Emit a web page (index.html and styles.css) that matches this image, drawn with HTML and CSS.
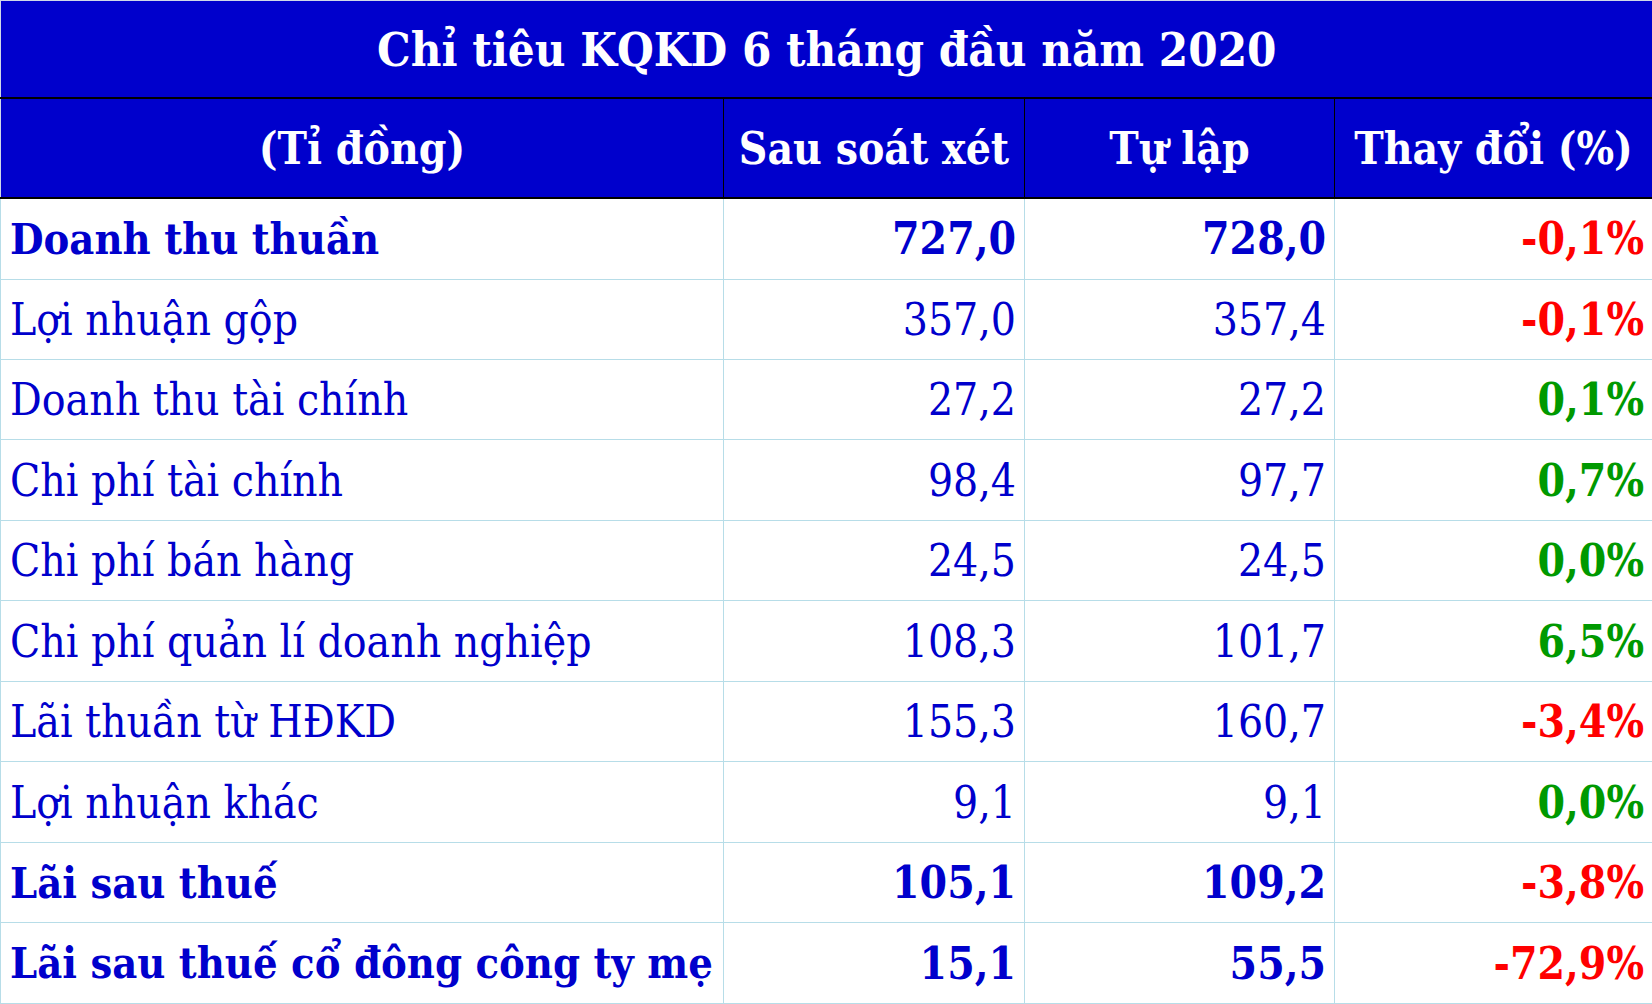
FILE: index.html
```html
<!DOCTYPE html>
<html lang="vi">
<head>
<meta charset="utf-8">
<title>Chỉ tiêu KQKD 6 tháng đầu năm 2020</title>
<link rel="stylesheet" href="styles.css">
</head>
<body>
<table class="kq">
  <colgroup>
    <col class="c1"><col class="c2"><col class="c3"><col class="c4">
  </colgroup>
  <thead>
    <tr class="title-row"><th colspan="4">Chỉ tiêu KQKD 6 tháng đầu năm 2020</th></tr>
    <tr class="head-row">
      <th>(Tỉ đồng)</th><th>Sau soát xét</th><th>Tự lập</th><th>Thay đổi (%)</th>
    </tr>
  </thead>
  <tbody>
    <tr class="b"><td>Doanh thu thuần</td><td>727,0</td><td>728,0</td><td class="neg">-0,1%</td></tr>
    <tr><td>Lợi nhuận gộp</td><td>357,0</td><td>357,4</td><td class="neg">-0,1%</td></tr>
    <tr><td>Doanh thu tài chính</td><td>27,2</td><td>27,2</td><td class="pos">0,1%</td></tr>
    <tr><td>Chi phí tài chính</td><td>98,4</td><td>97,7</td><td class="pos">0,7%</td></tr>
    <tr><td>Chi phí bán hàng</td><td>24,5</td><td>24,5</td><td class="pos">0,0%</td></tr>
    <tr><td>Chi phí quản lí doanh nghiệp</td><td>108,3</td><td>101,7</td><td class="pos">6,5%</td></tr>
    <tr><td>Lãi thuần từ HĐKD</td><td>155,3</td><td>160,7</td><td class="neg">-3,4%</td></tr>
    <tr><td>Lợi nhuận khác</td><td>9,1</td><td>9,1</td><td class="pos">0,0%</td></tr>
    <tr class="b"><td>Lãi sau thuế</td><td>105,1</td><td>109,2</td><td class="neg">-3,8%</td></tr>
    <tr class="b"><td>Lãi sau thuế cổ đông công ty mẹ</td><td>15,1</td><td>55,5</td><td class="neg">-72,9%</td></tr>
  </tbody>
</table>
</body>
</html>
```
FILE: styles.css
```css
html, body {
  margin: 0;
  padding: 0;
  background: #ffffff;
}
.kq {
  width: 1652px;
  height: 1004px;
  border-collapse: collapse;
  table-layout: fixed;
  font-family: "DejaVu Serif Condensed", "DejaVu Serif", serif;
  color: #0000cc;
}
.c1 { width: 723px; }
.c2 { width: 301px; }
.c3 { width: 310px; }
.c4 { width: 318px; }

.title-row th {
  height: 96px;
  background: #0000cc;
  color: #ffffff;
  font-size: 47px;
  font-weight: bold;
  text-align: center;
  border-top: 1px solid #d0d8e8;
  border-left: 1px solid #d0d8e8;
  border-bottom: 2px solid #000000;
  padding: 0;
}
.head-row th {
  height: 98px;
  background: #0000cc;
  color: #ffffff;
  font-size: 44px;
  font-weight: bold;
  text-align: center;
  border-left: 1px solid #000000;
  border-right: 1px solid #000000;
  border-bottom: 2px solid #000000;
  padding: 0;
}
.head-row th:first-child { border-left: 1px solid #d0d8e8; }

.kq td {
  height: 79px;
  font-size: 44px;
  padding: 0 8px 0 9px;
  border: 1px solid #b7dde8;
  text-align: right;
  white-space: nowrap;
  vertical-align: middle;
}
.kq td:first-child { text-align: left; }
.kq tr.b td { font-weight: bold; }
.kq tr.b td:first-child { font-size: 43px; }
.kq td.neg, .kq td.pos { font-weight: bold; }
.neg { color: #ff0000; }
.pos { color: #009900; }
```
